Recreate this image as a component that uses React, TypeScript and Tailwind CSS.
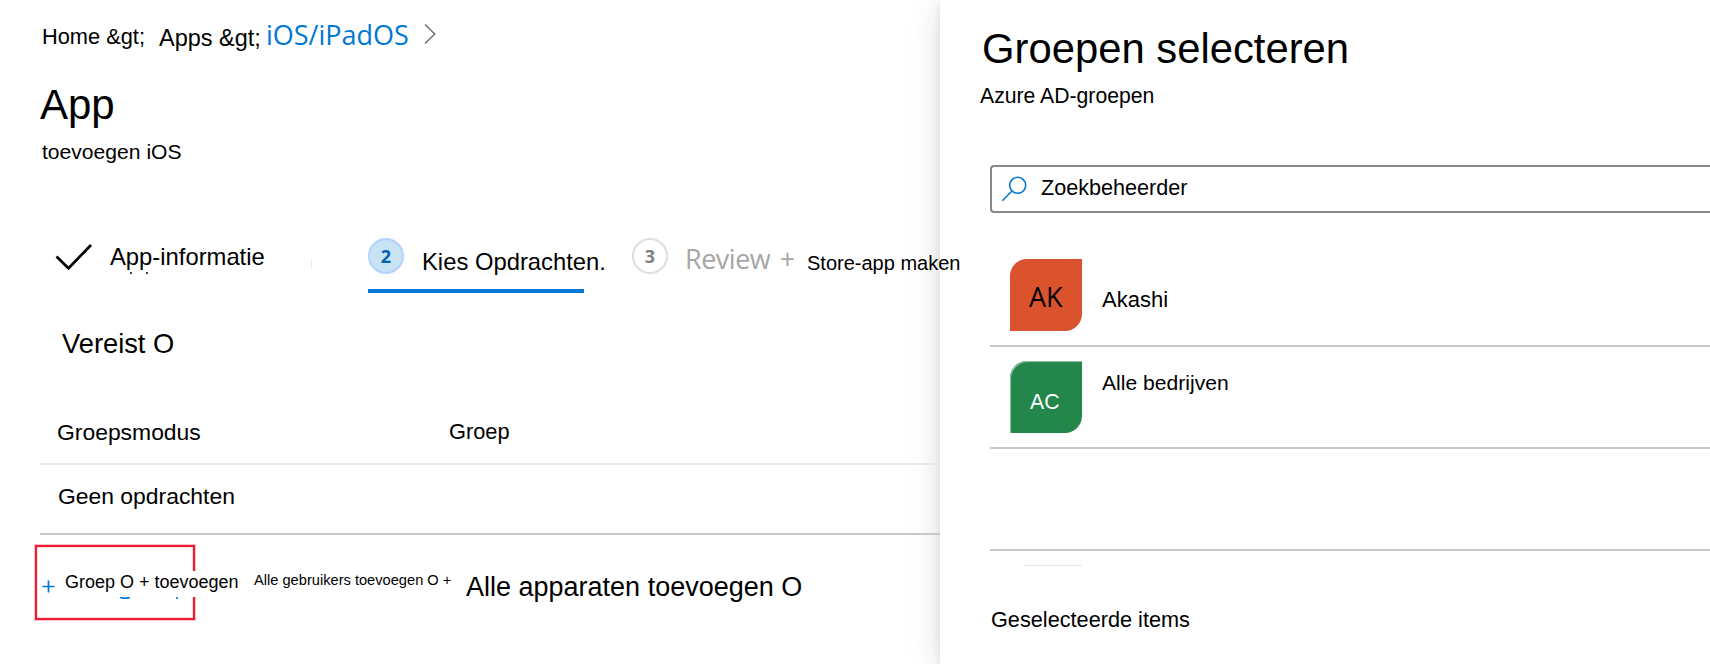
import type { ReactNode } from "react";

const humanist = "font-['Open_Sans','Noto_Sans',sans-serif]";

function Label({ className, children }: { className: string; children: ReactNode }) {
  return <span className={`block shrink-0 whitespace-nowrap leading-[30px] ${className}`}>{children}</span>;
}

function Breadcrumb() {
  return (
    <nav className="flex h-[80px] shrink-0 items-start pl-[42px]">
      <Label className="mt-[22px] w-[117px] text-[21.8px]">Home &amp;gt;</Label>
      <Label className="mt-[23px] w-[107px] text-[23.5px]">Apps &amp;gt;</Label>
      <Label className={`mt-[20px] w-[157px] text-[27px] text-[#0078d4] ${humanist}`}>iOS/iPadOS</Label>
      <svg className="mt-[23px] h-[22px] w-[13px] shrink-0" viewBox="0 0 13 22" fill="none" stroke="#666" strokeWidth="1.3">
        <path d="M2 1.5 L11.8 11 L2 20.5" />
      </svg>
    </nav>
  );
}

function Stepper() {
  return (
    <div className="mt-[53px] flex h-[73px] shrink-0 items-start pl-[55px]">
      <svg className="mt-[22px] h-[30px] w-[38px] shrink-0" viewBox="0 0 38 30" fill="none" stroke="#000" strokeWidth="2.7">
        <path d="M1.5 14.5 L13.5 26.3 L36 3" />
      </svg>
      <div className="mt-[22px] ml-[17px] w-[201px] shrink-0">
        <Label className="h-[30px] text-[23.8px]">App-informatie</Label>
        <div className="flex gap-[14px] pl-[20px]">
          <i className="size-[2px] bg-[#444]" />
          <i className="size-[2px] bg-[#444]" />
        </div>
      </div>
      <div className="mt-[39px] h-[10px] w-px shrink-0 bg-[#ececec]" />
      <div className="ml-[56px] flex h-[73px] w-[216px] shrink-0 items-start border-b-4 border-[#0078d4]">
        <div className={`mt-[18px] flex size-9 shrink-0 items-center justify-center rounded-full border-2 border-[#b4d2ff] bg-[#c8e3f3] text-[18px] font-bold text-[#0063b1] ${humanist}`}>
          2
        </div>
        <Label className="mt-[27px] ml-[18px] text-[23.8px]">Kies Opdrachten.</Label>
      </div>
      <div className={`mt-[18px] ml-[48px] flex size-9 shrink-0 items-center justify-center rounded-full border-2 border-[#dedede] text-[18px] font-bold text-[#808080] ${humanist}`}>
        3
      </div>
      <Label className={`mt-[24px] ml-[17px] w-[122px] text-[27px] tracking-[-0.5px] [word-spacing:3px] text-[#a6a6a6] ${humanist}`}>Review +</Label>
      <Label className="mt-[28px] text-[20px]">Store-app maken</Label>
    </div>
  );
}

function Assignments() {
  return (
    <section className="shrink-0 pl-[40px]">
      <div className="mt-[36px] h-[64px] pl-[22px]">
        <Label className="text-[27.3px]">Vereist O</Label>
      </div>
      <div className="flex h-[72px] items-start border-b-2 border-[#e8e8e8] pl-[17px]">
        <Label className="mt-[24px] w-[392px] text-[22.9px]">Groepsmodus</Label>
        <Label className="mt-[24px] text-[21.8px]">Groep</Label>
      </div>
      <div className="flex h-[70px] items-start border-b-2 border-[#c8c8c8] pl-[18px]">
        <Label className="mt-[16px] text-[22.9px]">Geen opdrachten</Label>
      </div>
    </section>
  );
}

function Actions() {
  return (
    <div className="flex items-start pt-[10px] pl-[35px]">
      <div className="flex h-[75px] w-[160px] shrink-0 items-start border-2 border-[#ed1c34] shadow-[0_0_0_1px_#f9c3c9,inset_0_0_0_1px_#fbdde0]">
        <svg className="mt-[33px] ml-[5px] h-[13px] w-[13px] shrink-0" viewBox="0 0 13 13" stroke="#0078d4" strokeWidth="1.7">
          <path d="M6.5 0.5 V12.5 M0.5 6.5 H12.5" />
        </svg>
        <div className="mt-[24px] ml-[9px] w-[182px] shrink-0">
          <div className="h-[26px] bg-white pl-[1px] text-[18px] leading-[22px] whitespace-nowrap">Groep O + toevoegen</div>
          <svg className="h-[3px] w-[120px]" viewBox="0 0 120 3" fill="none" stroke="#0078d4" strokeWidth="1.6">
            <path d="M56 0.2 Q61 2.4 66 0.2 M113 0 V2" />
          </svg>
        </div>
      </div>
      <Label className="mt-[20px] ml-[59px] w-[212px] text-[14.65px]">Alle gebruikers toevoegen O +</Label>
      <Label className="mt-[27px] text-[27px]">Alle apparaten toevoegen O</Label>
    </div>
  );
}

function GroupPanel() {
  return (
    <aside className="flex min-w-0 flex-1 flex-col overflow-visible bg-white shadow-[0_2px_8px_rgba(0,0,0,0.1),0_6px_34px_rgba(0,0,0,0.12)]">
      <h2 className="mt-[24px] h-[57px] pl-[42px] text-[41.8px] leading-[50px] whitespace-nowrap">Groepen selecteren</h2>
      <Label className="h-[84px] pl-[40px] text-[21.2px]">Azure AD-groepen</Label>
      <div className="ml-[50px] flex h-[48px] shrink-0 items-start rounded-l-[4px] border-2 border-r-0 border-[#888]">
        <svg className="mt-[9px] ml-[9px] h-[28px] w-[28px] shrink-0" viewBox="0 0 28 28" fill="none" stroke="#0078d4" strokeWidth="1.6">
          <circle cx="16.7" cy="9.3" r="8" />
          <path d="M11 15 L1.3 24.7" />
        </svg>
        <Label className="mt-[6px] ml-[12px] text-[21.6px]">Zoekbeheerder</Label>
      </div>
      <ul className="ml-[50px] shrink-0">
        <li className="flex h-[134px] items-start border-b-2 border-[#c8c8c8] pl-[20px]">
          <div className={`mt-[46px] size-[72px] shrink-0 rounded-tl-[17px] rounded-br-[17px] bg-[#da532c] pt-[23px] pl-[19px] text-[27px] leading-[30px] ${humanist}`}>
            AK
          </div>
          <Label className="mt-[72px] ml-[20px] text-[22px]">Akashi</Label>
        </li>
        <li className="flex h-[102px] items-start border-b-2 border-[#c8c8c8] pl-[20px]">
          <div className="mt-[14px] size-[72px] shrink-0 rounded-tl-[17px] rounded-br-[17px] bg-[#23864b] pt-[26px] pl-[20px] text-[21.3px] leading-[30px] text-white shadow-[inset_1px_1px_1px_#8fc5a4]">
            AC
          </div>
          <Label className="mt-[21px] ml-[20px] text-[21.1px]">Alle bedrijven</Label>
        </li>
        <li className="h-[102px] border-b-2 border-[#c8c8c8]" />
      </ul>
      <div className="mt-[14px] ml-[83px] h-px w-[59px] shrink-0 bg-[#e4e4f2]" />
      <Label className="mt-[39px] pl-[51px] text-[21.7px]">Geselecteerde items</Label>
    </aside>
  );
}

export default function App() {
  return (
    <div className="flex h-[664px] w-full overflow-hidden bg-white font-['Liberation_Sans',Arial,sans-serif] text-black">
      <main className="relative z-10 flex w-[940px] shrink-0 flex-col">
        <Breadcrumb />
        <h1 className="h-[57px] shrink-0 pl-[40px] text-[42px] leading-[50px]">App</h1>
        <Label className="pl-[42px] text-[21.1px]">toevoegen iOS</Label>
        <Stepper />
        <Assignments />
        <Actions />
      </main>
      <GroupPanel />
    </div>
  );
}
